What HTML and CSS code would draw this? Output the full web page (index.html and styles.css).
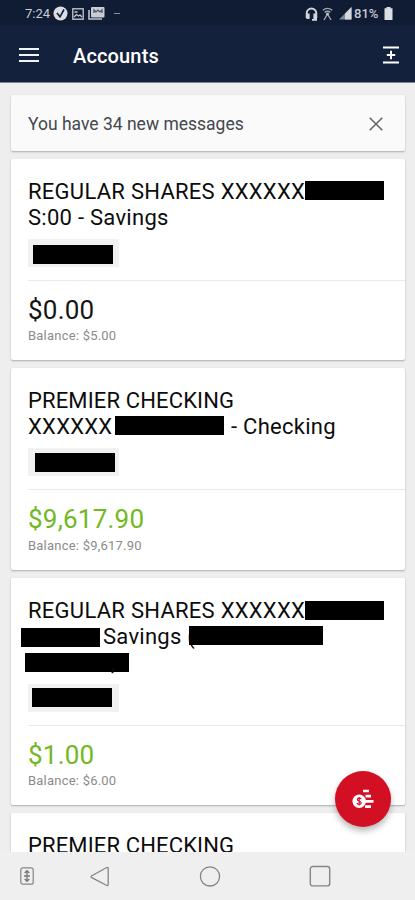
FILE: index.html
```html
<!DOCTYPE html>
<html lang="en">
<head>
<meta charset="utf-8">
<meta name="viewport" content="width=device-width, initial-scale=1">
<title>Accounts</title>
<link rel="stylesheet" href="styles.css">
</head>
<body>
<div class="phone">
  <div class="status">
    <div class="status-left">
      <span class="time">7:24</span>
      <svg width="15" height="15" viewBox="0 0 15 15"><circle cx="7.5" cy="7.5" r="7" fill="#dcdee3"/><path d="M4 7l3 3.800L11 3.500" fill="none" stroke="#14213b" stroke-width="1.700"/></svg>
      <svg width="12" height="12" viewBox="0 0 12 12"><rect x=".8" y=".8" width="10.4" height="10.4" fill="none" stroke="#c9ccd3" stroke-width="1.3"/><path d="M2.500 4h3M2 9l2.500-2.500L6.500 8 8 7l2 2" fill="none" stroke="#c9ccd3" stroke-width="1.3"/></svg>
      <svg width="17" height="13" viewBox="0 0 17 13"><path d="M1 3v9h13" fill="none" stroke="#bfc3cc" stroke-width="1.6"/><rect x="3" y="0" width="13.5" height="10.5" rx="1" fill="#c9ccd3"/><path d="M6 6V3l2 2 2-2 2 2 2-2v3" fill="none" stroke="#48516a" stroke-width="1.2"/></svg>
      <span class="dash"></span>
    </div>
    <div class="status-right">
      <svg width="13" height="14" viewBox="0 0 13 14"><path d="M1.7 11V6.3a4.8 4.8 0 0 1 9.6 0V11" fill="none" stroke="#d5d7dd" stroke-width="1.9"/><path d="M1 6.5h3.6V12H2.4A1.4 1.4 0 0 1 1 10.600zM12 6.500H8.400V12H12zM7 12h5v1.700H7z" fill="#d5d7dd"/></svg>
      <svg width="11" height="14" viewBox="0 0 11 14"><path d="M.8 3.300Q5.500-.6 10.200 3.300M2.700 5.400Q5.500 3 8.300 5.400M5.500 7L2 13M5.500 7L9 13" fill="none" stroke="#9fa5b2" stroke-width="1.400"/><circle cx="5.500" cy="7" r="1.600" fill="#b5bac4"/></svg>
      <svg class="signal" width="13" height="13" viewBox="0 0 13 13"><path d="M0 12.500L12.500 0v12.500z" fill="#7f8797"/><path d="M6 12.500V6.500L12.500 0v12.500z" fill="#d5d7dd"/></svg>
      <span class="percent">81%</span>
      <svg width="9" height="13" viewBox="0 0 9 13"><path d="M2.500 0h4v1.300h2V13H.5V1.300h2z" fill="#dcdee3"/></svg>
    </div>
  </div>
  <header class="bar">
    <svg width="20" height="16" viewBox="0 0 20 16"><path d="M0 2h20M0 8h20M0 14h20" stroke="#f2f3f5" stroke-width="2.200"/></svg>
    <h1>Accounts</h1>
    <svg class="add" width="16" height="18" viewBox="0 0 16 18"><path d="M0 1.500h16M0 16.500h16M3.800 9h8.400M8 4.800v8.400" stroke="#fff" stroke-width="2"/></svg>
  </header>
  <main class="content">
    <section class="card notice">
      <span>You have 34 new messages</span>
      <svg width="14" height="14" viewBox="0 0 14 14"><path d="M.7.7l12.600 12.600M13.300.7L.7 13.300" stroke="#686868" stroke-width="1.600"/></svg>
    </section>

    <section class="card">
      <div class="head">
        <div class="line"><span class="t-shares">REGULAR SHARES XXXXXX</span><i class="mask w79"></i></div>
        <div class="line">S:00 - Savings</div>
        <div class="chip"><i class="mask chip-a"></i></div>
      </div>
      <div class="amount">$0.00</div>
      <div class="balance">Balance: $5.00</div>
    </section>

    <section class="card">
      <div class="head">
        <div class="line tight">PREMIER CHECKING</div>
        <div class="line"><span class="t-x">XXXXXX</span><i class="mask w109"></i><span class="t-check">- Checking</span></div>
        <div class="chip"><i class="mask chip-b"></i></div>
      </div>
      <div class="amount green">$9,617.90</div>
      <div class="balance">Balance: $9,617.90</div>
    </section>

    <section class="card">
      <div class="head">
        <div class="line"><span class="t-shares">REGULAR SHARES XXXXXX</span><i class="mask w79 low"></i></div>
        <div class="line"><i class="mask lead"></i><span class="t-savings">Savings (</span><i class="mask w134"></i></div>
        <div class="line"><i class="mask third"></i><span class="comma">,</span></div>
        <div class="chip"><i class="mask chip-c"></i></div>
      </div>
      <div class="amount green">$1.00</div>
      <div class="balance">Balance: $6.00</div>
    </section>

    <section class="card">
      <div class="head">
        <div class="line tight">PREMIER CHECKING</div>
      </div>
    </section>

    <div class="fab">
      <svg width="22" height="20" viewBox="0 0 22 20"><path d="M11 2h6M13.500 7.200h5.500M13 12.400h8.500M13 17.600h6" stroke="#fff" stroke-width="2.700"/><circle cx="7.200" cy="12.200" r="6.700" fill="#fff"/><path d="M9.200 10C8.500 8.600 5.400 8.700 5.400 10.400S9.100 11.900 9.100 13.900 5.500 15.600 4.900 14M7.200 8v8.500" fill="none" stroke="#cf1225" stroke-width="1.200"/></svg>
    </div>
  </main>
  <nav class="nav">
    <svg width="14" height="18" viewBox="0 0 14 18"><rect x=".8" y=".8" width="12.400" height="16.400" rx="2" fill="none" stroke="#858585" stroke-width="1.200"/><path d="M7 4v10M4 9h6M4.700 6L7 3.700 9.300 6M4.700 12L7 14.300 9.300 12" fill="none" stroke="#777" stroke-width="1.300"/></svg>
    <svg class="back" width="20" height="22" viewBox="0 0 20 22"><path d="M16.800 2.500L1.800 10.800Q.4 11.700 1.800 12.600L16.800 20.500Q18.200 21 18.200 19.500V3.500Q18.200 2 16.800 2.500z" fill="none" stroke="#858585" stroke-width="1.300"/></svg>
    <svg class="home" width="22" height="22" viewBox="0 0 22 22"><circle cx="11" cy="11.400" r="9.600" fill="none" stroke="#858585" stroke-width="1.300"/></svg>
    <svg class="recent" width="22" height="22" viewBox="0 0 22 22"><rect x="1.300" y="1.500" width="19.400" height="19.400" rx="2.500" fill="none" stroke="#858585" stroke-width="1.400"/></svg>
  </nav>
</div>
</body>
</html>
```
FILE: styles.css
```css
* { box-sizing: border-box; }

body {
  margin: 0;
  font-family: Roboto, "Liberation Sans", sans-serif;
  background: #eee;
}

svg { display: block; flex: none; }

.phone {
  width: 415px;
  height: 900px;
  display: flex;
  flex-direction: column;
  overflow: hidden;
}

.status {
  flex: none;
  height: 26px;
  padding: 1px 22px 0 25px;
  display: flex;
  justify-content: space-between;
  align-items: center;
  background: #101b34;
  color: #c9ccd3;
  font-size: 13px;
}

.status-left, .status-right { display: flex; align-items: center; }
.status-left { gap: 4px; }
.status-right { gap: 4px; }
.time { width: 24px; }
.percent { width: 26px; margin-left: -2px; font-size: 13px; font-weight: 500; }
.signal { margin-left: 2px; }
.dash { width: 6px; height: 1px; margin-left: 5px; background: #858c9b; }

.bar {
  flex: none;
  height: 57px;
  padding: 2px 16px 0 19px;
  display: flex;
  align-items: center;
  background: #14213d;
  border-bottom: 1px solid #7d8492;
}

.bar h1 {
  margin: 1px 0 0 34px;
  font-size: 20px;
  font-weight: 500;
  letter-spacing: .15px;
  line-height: 26px;
  color: #fff;
}

.add { margin-left: auto; }

.content {
  position: relative;
  flex: 1;
  min-height: 0;
  overflow: hidden;
  padding: 12px 10px 0 11px;
  display: flex;
  flex-direction: column;
  gap: 8px;
}

.card {
  flex: none;
  background: #fff;
  border-radius: 2px;
  box-shadow: 0 1px 2px rgba(0, 0, 0, .28);
  padding: 20px 0 16px 17px;
}

.notice {
  height: 56px;
  padding: 1px 22px 0 17px;
  display: flex;
  align-items: center;
  justify-content: space-between;
  background: #fafafa;
  color: #43474e;
  font-size: 17.5px;
}

.head {
  padding-bottom: 13px;
  border-bottom: 1px solid #e9e9e9;
}

.line {
  display: flex;
  height: 26px;
  line-height: 26px;
  font-size: 22px;
  letter-spacing: .27px;
  color: #0c0c0c;
  white-space: pre;
}

.tight { letter-spacing: .14px; }

.mask {
  flex: none;
  display: block;
  height: 19px;
  margin-top: 2px;
  background: #000;
}

.t-shares { width: 277px; }
.t-x { width: 87px; }
.t-check { margin-left: 7px; }
.t-savings { width: 86px; margin-left: 3px; }
.w79 { width: 79px; }
.low { margin-top: 3px; }
.w109 { width: 109px; margin-top: 2px; }
.w134 { width: 134px; margin-top: 2px; }
.lead { width: 79px; margin: 4px 0 0 -7px; }
.third { width: 104px; margin: 3px 0 0 -3px; }
.comma { width: 0; margin-left: -18px; }

.chip {
  width: 91px;
  height: 28px;
  margin-top: 8px;
  padding-top: 6px;
  background: #f1f1f1;
}

.chip .mask { width: 80px; margin: 0 0 0 5px; }
.chip .chip-b { margin: -1px 0 0 7px; }
.chip .chip-c { margin: -2px 0 0 4px; }

.amount {
  margin-top: 13px;
  height: 32px;
  line-height: 32px;
  font-size: 26px;
  letter-spacing: .22px;
  color: #151515;
}

.amount.green { color: #72b81f; }

.balance {
  margin-top: 2.300px;
  height: 16px;
  line-height: 16px;
  font-size: 13px;
  letter-spacing: .22px;
  color: #8b8b8b;
}

.fab {
  position: absolute;
  right: 24px;
  bottom: 25px;
  width: 56px;
  height: 56px;
  border-radius: 50%;
  display: flex;
  align-items: center;
  justify-content: center;
  background: #d20f23;
  box-shadow: 0 4px 6px rgba(0, 0, 0, .28);
}

.nav {
  flex: none;
  height: 48px;
  padding-left: 20px;
  display: flex;
  align-items: center;
  background: #efefef;
}

.back { margin-left: 56px; }
.home { margin-left: 89px; }
.recent { margin-left: 88px; }
```
